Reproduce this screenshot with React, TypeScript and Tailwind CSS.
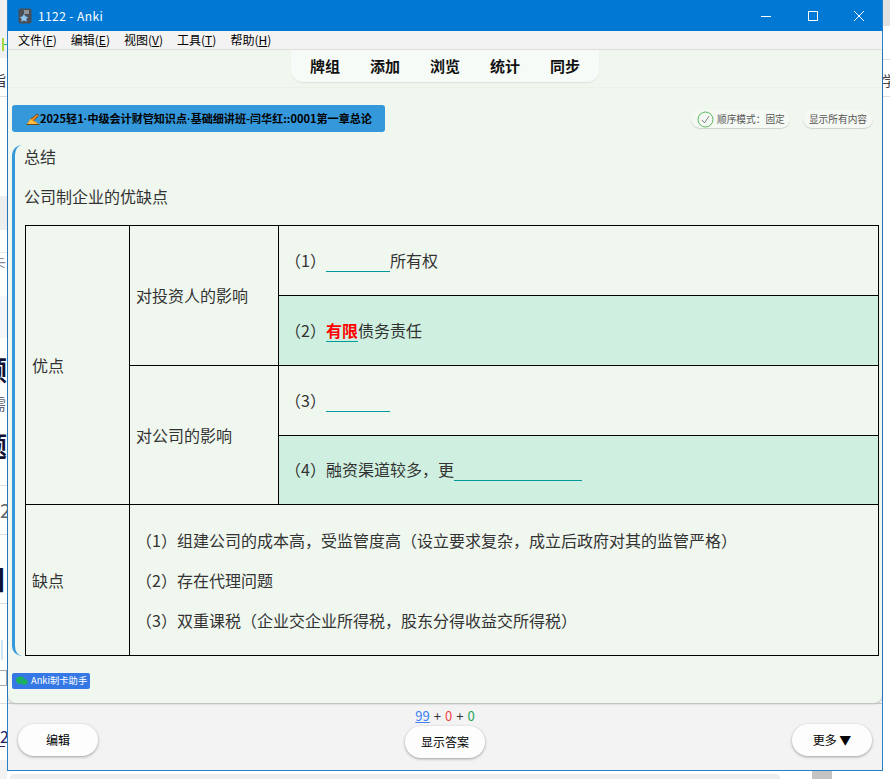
import React from "react";

const font = { fontFamily: '"Noto Sans CJK SC", "Noto Sans", sans-serif' };

function Blank({ w, tall, children }: { w: string; tall?: boolean; children?: React.ReactNode }) {
  return (
    <span className={`inline-block ${w} ${tall ? "leading-[22px]" : "leading-[21px]"} border-b border-[#009a9a] text-center align-baseline`}>
      {children ?? "\u00a0"}
    </span>
  );
}

function Pill({ className, children }: { className: string; children: React.ReactNode }) {
  return (
    <button className={`flex items-center justify-center rounded-[16px] bg-[#fdfdfd] text-[12px] text-black shadow-[0_1px_3px_rgba(0,0,0,0.35)] ${className}`}>
      {children}
    </button>
  );
}

function Dot() {
  return <span className="font-[family-name:Liberation_Sans]">·</span>;
}

const cell = "border border-black align-middle";

export default function App() {
  return (
    <div className="relative h-[779px] w-[890px] overflow-hidden bg-white text-[#333]" style={font}>
      {/* desktop page fragments behind the window */}
      <div className="absolute left-0 top-0 h-[779px] w-[7px] overflow-hidden text-[#334] text-[16px]">
        <div className="absolute left-0 top-0 h-[58px] w-[7px] bg-[#f1f1f1]" />
        <div className="absolute left-[2px] top-[38px] h-[13px] w-[2px] bg-[#a8d840]" />
        <div className="absolute left-[4px] top-[44px] h-[1px] w-[3px] bg-[#20c060]" />
        <div className="absolute left-[-9px] top-[70px] text-[15px] leading-[20px]">指</div>
        <div className="absolute left-0 top-[96px] h-px w-[7px] bg-[#ddd]" />
        <div className="absolute left-[-22px] top-[130px] text-[28px] font-bold leading-[30px] text-[#113]">/</div>
        <div className="absolute left-0 top-[196px] h-[34px] w-[7px] bg-[#eeeeee]" />
        <div className="absolute left-0 top-[252px] h-px w-[7px] bg-[#e8e8e8]" />
        <div className="absolute left-[-9px] top-[252px] text-[15px] leading-[22px] text-[#889]">卡</div>
        <div className="absolute left-0 top-[296px] h-[42px] w-[7px] bg-[#f4f6fa]" />
        <div className="absolute left-[-20px] top-[354px] text-[27px] font-bold leading-[32px] text-[#113]">顾</div>
        <div className="absolute left-[-9px] top-[394px] text-[15px] leading-[20px] text-[#667]">需</div>
        <div className="absolute left-[-20px] top-[430px] text-[27px] font-bold leading-[32px] text-[#113]">题</div>
        <div className="absolute left-0 top-[485px] h-px w-[7px] bg-[#ddd]" />
        <div className="absolute left-0 top-[498px] text-[19px] leading-[24px] text-[#666]">2</div>
        <div className="absolute left-0 top-[534px] h-px w-[7px] bg-[#ddd]" />
        <div className="absolute left-[-20px] top-[563px] text-[27px] font-bold leading-[32px] text-[#113]">日</div>
        <div className="absolute left-0 top-[603px] h-px w-[7px] bg-[#ddd]" />
        <div className="absolute left-[1px] top-[640px] h-[20px] w-[2px] bg-[#cfe6f5]" />
        <div className="absolute left-0 top-[670px] h-[16px] w-[7px] border border-l-0 border-[#aaa]" />
        <div className="absolute left-0 top-[703px] h-px w-[7px] bg-[#ddd]" />
        <div className="absolute left-0 top-[724px] text-[16px] leading-[24px] text-[#226]">2</div>
        <div className="absolute left-0 top-[746px] h-px w-[5px] bg-[#226]" />
        <div className="absolute left-0 top-[760px] h-[19px] w-[7px] bg-[#f2f2f2]" />
      </div>
      <div className="absolute left-[883px] top-0 h-[779px] w-[7px] overflow-hidden">
        <div className="absolute left-0 top-0 h-[26px] w-[7px] bg-[#e2e2e2]" />
        <div className="absolute left-0 top-[59px] h-px w-[7px] bg-[#ddd]" />
        <div className="absolute left-[-1px] top-[70px] text-[14px] leading-[20px] text-[#444]">学</div>
        <div className="absolute left-0 top-[96px] h-px w-[7px] bg-[#ddd]" />
      </div>
      <div className="absolute left-[812px] top-[771px] h-[8px] w-[20px] bg-[#c4c4c4]" />
      <div className="absolute left-[10px] top-[774px] h-[5px] w-[770px] rounded-t bg-[#eeeeee]" />

      {/* Anki window */}
      <div className="absolute left-[7px] top-0 flex h-[771px] w-[876px] flex-col border border-t-0 border-[#2a7fc9] bg-[#f3f3f3]">
        <div className="flex h-[31px] shrink-0 items-center bg-[#0078d4] pl-[10px] text-white">
          <svg width="14" height="16" viewBox="0 0 14 16" className="mr-[6px]">
            <rect x="0.5" y="0.5" width="13" height="15" rx="2" fill="#4a4f57" />
            <rect x="6" y="2" width="5" height="4" fill="#8d939b" />
            <path d="M6 6l1.600 2.600 2.400.5-1.600 2 .3 2.600L6 12.600 3.300 13.700l.3-2.600-1.600-2 2.400-.5z" fill="#8ec5ee" />
          </svg>
          <span className="text-[12px] tracking-[0.4px]">1122 - Anki</span>
          <div className="ml-auto flex h-[31px] items-center">
            <svg width="12" height="12" viewBox="0 0 12 12" className="mr-[35px]"><path d="M1 6.500h10" stroke="#fff" strokeWidth="1" /></svg>
            <svg width="12" height="12" viewBox="0 0 12 12" className="mr-[34px]"><rect x="1.500" y="1.500" width="9" height="9" fill="none" stroke="#fff" strokeWidth="1" /></svg>
            <svg width="12" height="12" viewBox="0 0 12 12" className="mr-[17px]"><path d="M1 1l10 10M11 1L1 11" stroke="#fff" strokeWidth="1" /></svg>
          </div>
        </div>

        <div className="flex h-[19px] shrink-0 items-center gap-[14px] border-b border-[#e0e0e0] pl-[10px] text-[12px] leading-[18px] text-black">
          {[["文件", "F"], ["编辑", "E"], ["视图", "V"], ["工具", "T"], ["帮助", "H"]].map(([a, k]) => (
            <span key={k}>{a}(<span className="underline">{k}</span>)</span>
          ))}
        </div>

        <div className="relative flex min-h-0 flex-1 flex-col rounded-b-[8px] bg-[#f0f7ef] shadow-[0_1px_2px_rgba(0,0,0,0.25)]">
          <div className="flex h-[38px] shrink-0 justify-center border-b border-[#eaf2e9]">
            <nav className="flex h-[32px] w-[308px] items-center justify-center gap-[30px] rounded-b-[12px] bg-[#f7fbf7] text-[15px] font-bold text-[#111] shadow-[0_1px_1px_rgba(0,0,0,0.08)]">
              <span>牌组</span>
              <span>添加</span>
              <span>浏览</span>
              <span>统计</span>
              <span>同步</span>
            </nav>
          </div>

          <div className="flex shrink-0 items-center justify-between pl-[4px] pr-[9px] pt-[17px]">
            <div className="flex h-[27px] w-[373px] items-center rounded-[3px] bg-[#3498db] pl-[14px] text-[11.070px] font-bold text-black">
              <svg width="14" height="12" viewBox="0 0 14 12" className="shrink-0">
                <path d="M0.500 11.500L5 5l8 6.500z" fill="#f5a623" />
                <path d="M2 11L5 6.500l5 4.500z" fill="#f9c04a" />
                <path d="M0.500 11.500h13" stroke="#6b4a12" strokeWidth="1" />
                <path d="M5 6l6-5 1.500 1.500L7.500 8" fill="#f08a24" stroke="#5a3a10" strokeWidth="0.8" />
              </svg>
              <span className="whitespace-nowrap">2025轻1<Dot />中级会计财管知识点<Dot />基础细讲班-闫华红::0001第一章总论</span>
            </div>
            <div className="flex items-center gap-[13px] pt-[1px] text-[9.700px] text-[#555]">
              <div className="flex h-[18px] w-[99px] items-center rounded-[9px] bg-[#f5f9f4] shadow-[0_1px_1px_rgba(0,0,0,0.15)]">
                <svg width="17" height="17" viewBox="0 0 17 17" className="ml-[6px] mr-[3px] shrink-0">
                  <circle cx="8.500" cy="8.500" r="7.500" fill="none" stroke="#5cb85c" strokeWidth="1" />
                  <path d="M5 9l2.500 3L12 5" fill="none" stroke="#777" strokeWidth="0.9" />
                </svg>
                <span className="whitespace-nowrap">顺序模式：固定</span>
              </div>
              <div className="flex h-[18px] w-[70px] items-center justify-center rounded-[9px] bg-[#f5f9f4] whitespace-nowrap shadow-[0_1px_1px_rgba(0,0,0,0.15)]">
                显示所有内容
              </div>
            </div>
          </div>

          <div className="ml-[4px] mr-[3px] mt-[13px] rounded-l-[10px] border-l-[3px] border-[#3498db] pl-[10px]">
            <p className="-ml-px pt-[1px] text-[16px] leading-[21px]">总结</p>
            <p className="-ml-px mt-[19px] text-[16px] leading-[21px]">公司制企业的优缺点</p>
            <table className="mt-[18px] w-[854px] table-fixed border-collapse text-[16px] leading-[21px]">
              <colgroup>
                <col className="w-[104px]" />
                <col className="w-[149px]" />
                <col />
              </colgroup>
              <tbody>
                <tr className="h-[70px]">
                  <td rowSpan={4} className={`${cell} px-[6px]`}>优点</td>
                  <td rowSpan={2} className={`${cell} px-[6px]`}>对投资人的影响</td>
                  <td className={`${cell} px-[6px]`}>（1）<Blank tall w="w-[64px]" />所有权</td>
                </tr>
                <tr className="h-[70px] ">
                  <td className={`${cell} bg-[#cff0e0] px-[6px]`}>
                    （2）<Blank tall w="w-[32px]"><span className="font-bold text-[#ff0000]">有限</span></Blank>债务责任
                  </td>
                </tr>
                <tr className="h-[70px]">
                  <td rowSpan={2} className={`${cell} px-[6px]`}>对公司的影响</td>
                  <td className={`${cell} px-[6px]`}>（3）<Blank tall w="w-[64px]" /></td>
                </tr>
                <tr className="h-[69px]">
                  <td className={`${cell} bg-[#cff0e0] px-[6px]`}>（4）融资渠道较多，更<Blank w="w-[128px]" /></td>
                </tr>
                <tr className="h-[151px]">
                  <td className={`${cell} px-[6px]`}>缺点</td>
                  <td colSpan={2} className={`${cell} px-[6px]`}>
                    <p>（1）组建公司的成本高，受监管度高（设立要求复杂，成立后政府对其的监管严格）</p>
                    <p className="mt-[19px]">（2）存在代理问题</p>
                    <p className="mt-[19px]">（3）双重课税（企业交企业所得税，股东分得收益交所得税）</p>
                  </td>
                </tr>
              </tbody>
            </table>
          </div>

          <div className="ml-[4px] mt-[17px] flex h-[16px] w-[78px] items-center rounded-[2px] bg-[#3578e5] pl-[4px] text-[9.300px] text-white">
            <svg width="12" height="10" viewBox="0 0 12 10" className="mr-[3px] shrink-0">
              <ellipse cx="4.500" cy="4.200" rx="4.300" ry="3.700" fill="#19b45a" />
              <ellipse cx="8.300" cy="6" rx="3.500" ry="3" fill="#19b45a" stroke="#3578e5" strokeWidth="0.4" />
            </svg>
            <span className="whitespace-nowrap">Anki制卡助手</span>
          </div>
        </div>

        <div className="relative flex h-[67px] shrink-0 items-start justify-between border-t border-[#c4c4c4] pl-[10px] pr-[10px]">
          <Pill className="mt-[20px] h-[32px] w-[80px]">编辑</Pill>
          <div className="flex flex-col items-center pt-[4px]">
            <div className="flex gap-[4px] text-[13px] leading-[16px] text-[#333]">
              <span className="text-[#3b82f6] underline">99</span><span>+</span><span className="text-[#ef4444]">0</span><span>+</span><span className="text-[#22a35a]">0</span>
            </div>
            <Pill className="mt-[2px] h-[32px] w-[80px]">显示答案</Pill>
          </div>
          <Pill className="mt-[20px] h-[32px] w-[80px]">更多 ▼</Pill>
        </div>
      </div>
    </div>
  );
}
